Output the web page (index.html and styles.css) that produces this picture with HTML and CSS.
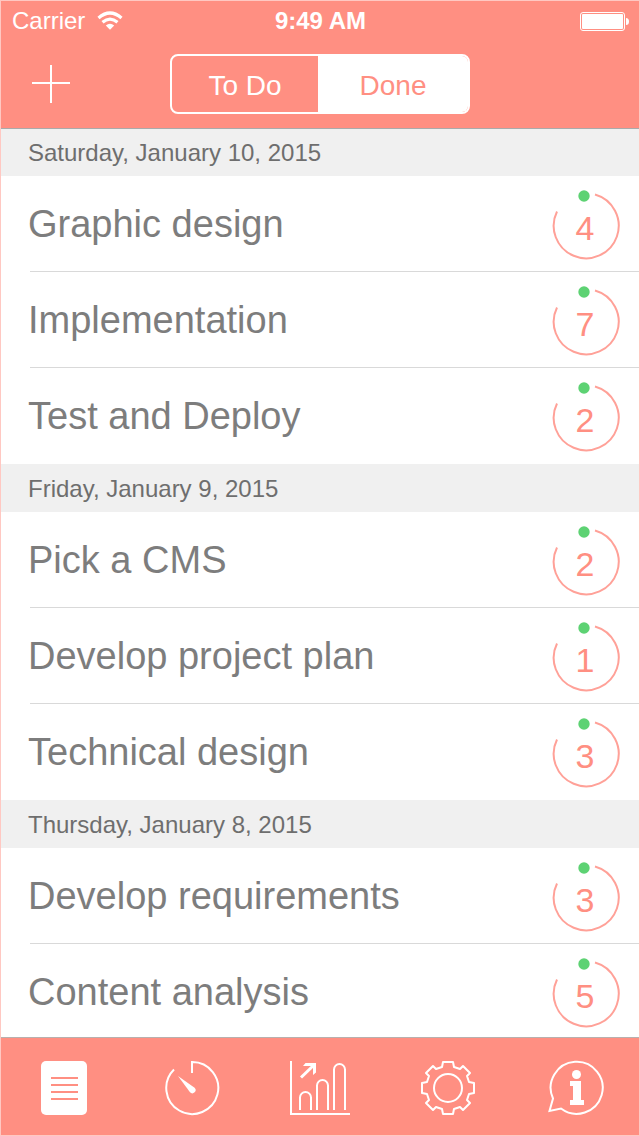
FILE: index.html
```html
<!doctype html>
<html lang="en">
<head>
  <meta charset="utf-8">
  <meta name="viewport" content="width=device-width, initial-scale=1">
  <title>Tasks</title>
  <link rel="stylesheet" href="styles.css">
</head>
<body>
  <svg class="defs" aria-hidden="true">
    <symbol id="ring" viewBox="0 0 70 74">
      <path d="M44 7.500A32.500 32.500 0 1 1 6 24.500" fill="none" stroke="#ffa198" stroke-width="2"/>
      <circle cx="33" cy="9" r="5.7" fill="#5dd273"/>
    </symbol>
  </svg>

  <header class="header">
    <div class="status">
      <div class="carrier">
        <span>Carrier</span>
        <svg width="26" height="20" viewBox="0 0 26 20" fill="none" stroke="#fff" stroke-width="3.2">
          <path d="M1.5 7Q13-3 24.5 7"/>
          <path d="M5.5 11.300Q13 5 20.500 11.300"/>
          <path d="M8.800 14.500Q13 10.800 17.200 14.500L13 18.800Z" fill="#fff" stroke="none"/>
        </svg>
      </div>
      <time class="clock">9:49 AM</time>
      <svg class="battery" width="50" height="20" viewBox="0 0 50 20">
        <rect x="1.5" y="1.5" width="44" height="18" rx="2.5" fill="none" stroke="#fff"/>
        <rect x="3" y="3" width="41" height="15" rx="1" fill="#fff"/>
        <path d="M47 7q3 0 3 3.500t-3 3.500z" fill="#fff"/>
      </svg>
    </div>
    <div class="toolbar">
      <button class="add" type="button" aria-label="Add task">
        <svg width="38" height="38" viewBox="0 0 38 38" stroke="#fff" stroke-width="2"><path d="M0 18H38M19 0V38"/></svg>
      </button>
      <div class="segments">
        <button class="segment" type="button">To Do</button>
        <button class="segment active" type="button" aria-pressed="true">Done</button>
      </div>
    </div>
  </header>

  <main class="list">
    <section class="day">
      <h2>Saturday, January 10, 2015</h2>
      <ul>
        <li><span>Graphic design</span><svg class="count" viewBox="0 0 70 74"><use href="#ring"/><text x="34" y="53">4</text></svg></li>
        <li><span>Implementation</span><svg class="count" viewBox="0 0 70 74"><use href="#ring"/><text x="34" y="53">7</text></svg></li>
        <li><span>Test and Deploy</span><svg class="count" viewBox="0 0 70 74"><use href="#ring"/><text x="34" y="53">2</text></svg></li>
      </ul>
    </section>
    <section class="day">
      <h2>Friday, January 9, 2015</h2>
      <ul>
        <li><span>Pick a CMS</span><svg class="count" viewBox="0 0 70 74"><use href="#ring"/><text x="34" y="53">2</text></svg></li>
        <li><span>Develop project plan</span><svg class="count" viewBox="0 0 70 74"><use href="#ring"/><text x="34" y="53">1</text></svg></li>
        <li><span>Technical design</span><svg class="count" viewBox="0 0 70 74"><use href="#ring"/><text x="34" y="53">3</text></svg></li>
      </ul>
    </section>
    <section class="day">
      <h2>Thursday, January 8, 2015</h2>
      <ul>
        <li><span>Develop requirements</span><svg class="count" viewBox="0 0 70 74"><use href="#ring"/><text x="34" y="53">3</text></svg></li>
        <li><span>Content analysis</span><svg class="count" viewBox="0 0 70 74"><use href="#ring"/><text x="34" y="53">5</text></svg></li>
      </ul>
    </section>
  </main>

  <nav class="tabs">
    <a href="#tasks" aria-label="Tasks">
      <svg viewBox="0 0 62 56">
        <rect x="7" y="1" width="46" height="54" rx="5" fill="#fff" stroke="none"/>
        <path d="M17 18H44M17 25H44M17 32H44M17 39H44" stroke="#ff8f82"/>
      </svg>
    </a>
    <a href="#timer" aria-label="Timer">
      <svg viewBox="0 0 62 56">
        <path d="M31 13V2A26 26 0 1 1 13 9.500"/>
        <path d="M17 16L33.600 27.700A3.200 3.200 0 0 1 29 32.300Z" fill="#fff" stroke="none"/>
      </svg>
    </a>
    <a href="#stats" aria-label="Statistics">
      <svg viewBox="0 0 62 56">
        <path d="M2 1V54H61"/>
        <path d="M11 50V37.500a5.500 5.500 0 0 1 11 0V50M28 50V25.500a5.500 5.500 0 0 1 11 0V50M45 50V9.500a5.500 5.500 0 0 1 11 0V50"/>
        <path d="M12 17.500L25 5" stroke-width="3"/>
        <path d="M16.500 3H27V12.500L24 15V6H14Z" fill="#fff" stroke="none"/>
      </svg>
    </a>
    <a href="#settings" aria-label="Settings">
      <svg viewBox="0 0 62 56" stroke-linejoin="round">
        <circle cx="31" cy="28" r="14"/>
        <path d="M25 7L26 2H36L37 7L43 9L46 6L53 13L50 16L52 22L57 23V33L52 34L50 40L53 43L46 50L43 47L37 49L36 54H26L25 49L19 47L16 50L9 43L12 40L10 34L5 33V23L10 22L12 16L9 13L16 6L19 9Z"/>
      </svg>
    </a>
    <a href="#info" aria-label="Info">
      <svg viewBox="0 0 62 56">
        <path d="M9 38.500A26 26 0 1 1 17 48.500L5.500 51Z"/>
        <circle cx="32.500" cy="14.500" r="4.500" fill="#fff" stroke="none"/>
        <path d="M26 21H37V40H40V45H26V40H29V26H26Z" fill="#fff" stroke="none"/>
      </svg>
    </a>
  </nav>
</body>
</html>
```

FILE: styles.css
```css
* {
  box-sizing: border-box;
}
body {
  display: flex;
  flex-direction: column;
  height: 100vh;
  margin: 0;
  border: 1px solid #ffc8c2;
  background-color: #fff;
  font-family: "Liberation Sans", Arial, sans-serif;
}
button {
  padding: 0;
  border: none;
  background: none;
  font: inherit;
  color: inherit;
  cursor: pointer;
}
svg {
  display: block;
}
.defs {
  display: none;
}
.header {
  position: relative;
  background-color: #ff8f82;
  box-shadow: 0 1px 0 #aaa;
  color: #fff;
}
.status {
  display: grid;
  grid-template-columns: 1fr auto 1fr;
  align-items: center;
  height: 40px;
  padding: 0 10px 0 11px;
  font-size: 24px;
}
.carrier {
  display: flex;
  align-items: center;
  gap: 12px;
}
.clock {
  font-weight: bold;
}
.battery {
  justify-self: end;
}
.toolbar {
  display: grid;
  grid-template-columns: 1fr 300px 1fr;
  align-items: center;
  padding: 13px 0 14px;
}
.add {
  justify-self: start;
  margin-left: 31px;
}
.segments {
  display: grid;
  grid-template-columns: 146px 1fr;
  height: 60px;
  overflow: hidden;
  border: 2px solid #fff;
  border-radius: 8px;
  font-size: 28px;
}
.segment {
  padding-top: 3px;
}
.segment.active {
  background-color: #fff;
  color: #ff8f82;
}
.list {
  flex: 1;
  min-height: 0;
  overflow-y: auto;
  scrollbar-width: none;
}
.day h2 {
  height: 48px;
  margin: 0;
  padding-left: 27px;
  background-color: #f0f0f0;
  font-size: 24px;
  font-weight: normal;
  line-height: 50px;
  color: #6e6e6e;
}
.day ul {
  margin: 0;
  padding: 0 0 0 29px;
  list-style: none;
}
.day li {
  display: flex;
  align-items: center;
  justify-content: space-between;
  height: 96px;
  padding-right: 18px;
  border-bottom: 1px solid #d9d9d9;
  font-size: 38px;
  color: #7d7d7d;
}
.day li:last-child {
  border-bottom-color: transparent;
}
.day li span {
  margin-left: -2px;
  padding-top: 2px;
}
.count {
  width: 70px;
  height: 74px;
}
.count text {
  font-size: 34px;
  text-anchor: middle;
  fill: #ff8f82;
}
.tabs {
  display: grid;
  grid-template-columns: repeat(5, 1fr);
  padding: 22px 0 19px;
  border-top: 1px solid #b8b0ae;
  background-color: #ff8f82;
}
.tabs a {
  display: flex;
  justify-content: center;
}
.tabs svg {
  width: 62px;
  height: 56px;
  fill: none;
  stroke: #fff;
  stroke-width: 2;
}
```
